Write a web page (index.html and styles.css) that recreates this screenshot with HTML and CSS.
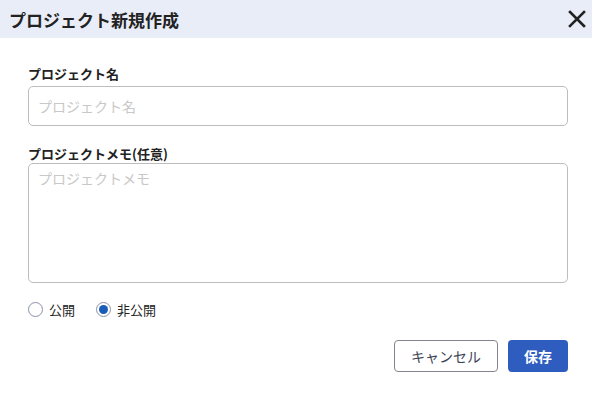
FILE: index.html
```html
<!DOCTYPE html>
<html lang="ja">
<head>
    <meta charset="UTF-8">
    <meta name="viewport" content="width=device-width, initial-scale=1.0">
    <title>プロジェクト新規作成</title>
    <link rel="stylesheet" href="styles.css">
</head>
<body>
<div class="dialog">
    <div class="dialog-header">
        <h1 class="dialog-title">プロジェクト新規作成</h1>
        <button class="close-button" aria-label="閉じる">
            <svg width="18" height="18" viewBox="0 0 18 18">
                <path d="M2 2 L16 16 M16 2 L2 16" stroke="#222" stroke-width="2.6" stroke-linecap="square" fill="none"/>
            </svg>
        </button>
    </div>

    <div class="dialog-body">
        <label class="field-label" for="project-name">プロジェクト名</label>
        <input class="text-input" id="project-name" type="text" placeholder="プロジェクト名">

        <label class="field-label second" for="project-memo">プロジェクトメモ(任意)</label>
        <textarea class="text-area" id="project-memo" placeholder="プロジェクトメモ"></textarea>

        <div class="radio-group">
            <label class="radio">
                <input type="radio" name="visibility" value="public">
                <span>公開</span>
            </label>
            <label class="radio">
                <input type="radio" name="visibility" value="private" checked>
                <span>非公開</span>
            </label>
        </div>

        <div class="actions">
            <button class="button button-cancel">キャンセル</button>
            <button class="button button-save">保存</button>
        </div>
    </div>
</div>
</body>
</html>
```

FILE: styles.css
```css
body {
    margin: 0;
    padding: 0;
    background-color: #fff;
    color: #222;
    font-family: "Noto Sans CJK JP", "Noto Sans", sans-serif;
}

.dialog {
    width: 592px;
    height: 399px;
    background: #fff;
}

.dialog-header {
    height: 38px;
    display: flex;
    align-items: center;
    justify-content: space-between;
    padding: 0 5px 0 9px;
    background-color: #e9edf8;
}

.dialog-title {
    margin: 0;
    font-size: 17px;
    font-weight: bold;
    color: #222;
    line-height: 1;
}

.close-button {
    display: flex;
    align-items: center;
    justify-content: center;
    width: 20px;
    height: 20px;
    padding: 0;
    border: none;
    background: none;
    cursor: pointer;
}

.dialog-body {
    padding: 27px 24px 0 28px;
}

.field-label {
    display: block;
    font-size: 13px;
    font-weight: bold;
    line-height: 18px;
    color: #222;
    margin-bottom: 3px;
}

.field-label.second {
    margin-top: 19px;
    margin-bottom: 0;
}

.text-input, .text-area {
    display: block;
    box-sizing: border-box;
    width: 100%;
    border: 1px solid #bdbdbd;
    border-radius: 5px;
    font-family: inherit;
    font-size: 14px;
    color: #222;
    padding: 0 9px;
    outline: none;
}

.text-input {
    height: 40px;
}

.text-area {
    height: 120px;
    padding-top: 4px;
    resize: none;
    line-height: 20px;
}

.text-input::placeholder, .text-area::placeholder {
    color: #c8c8c8;
}

.radio-group {
    display: flex;
    gap: 21px;
    margin-top: 17px;
}

.radio {
    display: flex;
    align-items: center;
    gap: 6px;
    font-size: 13px;
    color: #222;
    cursor: pointer;
}

.radio input {
    appearance: none;
    margin: 0;
    width: 15px;
    height: 15px;
    border: 1px solid #8b90a8;
    border-radius: 50%;
    box-sizing: border-box;
    display: flex;
    align-items: center;
    justify-content: center;
}

.radio input:checked::after {
    content: "";
    width: 9px;
    height: 9px;
    border-radius: 50%;
    background-color: #1a5db8;
}

.actions {
    display: flex;
    justify-content: flex-end;
    gap: 10px;
    margin-top: 21px;
}

.button {
    height: 32px;
    border-radius: 4px;
    font-family: inherit;
    font-size: 14px;
    cursor: pointer;
}

.button-cancel {
    width: 104px;
    background: #fff;
    border: 1px solid #85858f;
    color: #3c4458;
}

.button-save {
    width: 60px;
    background-color: #2e5dbf;
    border: none;
    color: #fff;
    font-weight: bold;
}

.button-save:hover {
    background-color: #244da3;
}
```
